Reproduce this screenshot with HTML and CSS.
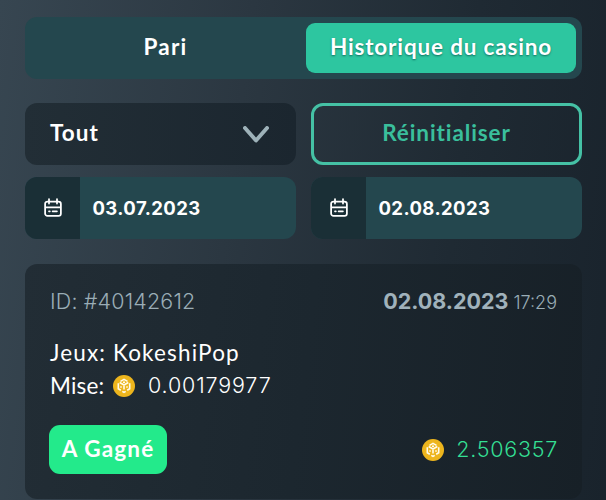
FILE: index.html
```html
<!DOCTYPE html>
<html lang="fr">
<head>
<meta charset="utf-8">
<title>Historique du casino</title>
<link rel="stylesheet" href="styles.css">
</head>
<body>
<svg class="defs" width="0" height="0" aria-hidden="true">
  <symbol id="calendar" viewBox="0 0 18 20">
    <path d="M3.5 3.5h11a2.4 2.4 0 0 1 2.4 2.4v9.6a2.4 2.4 0 0 1-2.4 2.4h-11a2.4 2.4 0 0 1-2.4-2.4V5.900a2.400 2.400 0 0 1 2.400-2.400zM1.100 9.300h15.800M5 1v4.500M13 1v4.500M5 13.300h.8M8.600 13.300h4.300" fill="none" stroke="currentColor" stroke-width="1.750" stroke-linecap="round"/>
  </symbol>
  <symbol id="coin" viewBox="0 0 22 22">
    <circle cx="11" cy="11" r="11" fill="#edb51d"/>
    <path d="M7.500 6.400 11 4.400l3.500 2M6.700 7.500 11 10l4.300-2.500M11 10v4.400M5.300 8.200v5.600l2.500 1.500M16.700 8.200v5.600l-2.500 1.500M9.300 16.400l1.700 1 1.700-1M8 11.200v1.500M14 11.200v1.500M10 7.200h2" fill="none" stroke="#fffbea" stroke-width="1.600"/>
  </symbol>
</svg>
<main class="page">
  <nav class="tabs">
    <a class="tab"><span class="tab-pari">Pari</span></a>
    <a class="tab active"><span class="tab-history">Historique du casino</span></a>
  </nav>
  <section class="filters">
    <div class="select">
      <span class="selected">Tout</span>
      <svg class="chevron" viewBox="0 0 26 17"><path d="M2 2l11 12.500L24 2" fill="none" stroke="currentColor" stroke-width="3.900" stroke-linecap="round" stroke-linejoin="round"/></svg>
    </div>
    <button class="reset">Réinitialiser</button>
    <div class="date"><span class="date-icon"><svg><use href="#calendar"/></svg></span><span class="date-value">03.07.2023</span></div>
    <div class="date"><span class="date-icon"><svg><use href="#calendar"/></svg></span><span class="date-value">02.08.2023</span></div>
  </section>
  <article class="card">
    <header class="row head">
      <span class="id">ID: #40142612</span>
      <span class="stamp"><b>02.08.2023</b><span class="time">17:29</span></span>
    </header>
    <div class="game">Jeux: KokeshiPop</div>
    <div class="bet"><span class="bet-label">Mise:</span><svg class="coin"><use href="#coin"/></svg><span class="amount">0.00179977</span></div>
    <footer class="row foot">
      <span class="won">A Gagné</span>
      <span class="payout"><svg class="coin"><use href="#coin"/></svg><span class="win">2.506357</span></span>
    </footer>
  </article>
</main>
</body>
</html>
```
FILE: styles.css
```css
* { box-sizing: border-box; }
body {
  margin: 0;
  height: 500px;
  overflow: hidden;
  background: linear-gradient(97deg, #374651 0%, #2b3741 38%, #1f2a33 72%, #19232c 100%);
  color: #fff;
  font-family: Lato, "Liberation Sans", sans-serif;
  font-size: 22.500px;
  font-variant-ligatures: none;
  white-space: nowrap;
}
.defs { display: block; }
.page { padding: 17px 24px 0 25px; }
.tabs {
  display: grid;
  grid-template-columns: 1fr 270px;
  height: 62px;
  padding: 6px 6px 6px 0;
  border-radius: 12px;
  background: #24474e;
}
.tab {
  display: flex;
  align-items: center;
  justify-content: center;
  font-weight: 700;
  border-radius: 9px;
  line-height: 46px;
  padding-bottom: 2px;
}
.tab-pari { letter-spacing: 1.200px; }
.tab-history { letter-spacing: 0.830px; }
.active { background: #2dc6a0; text-shadow: 0 1px 2px #08594dcc; }
.filters {
  display: grid;
  grid-template-columns: 271px 271px;
  gap: 12px 15px;
  margin-top: 24px;
}
.select, .reset, .date { height: 62px; border-radius: 12px; }
.select {
  display: flex;
  align-items: center;
  justify-content: space-between;
  padding: 0 27px 0 25px;
  background: linear-gradient(90deg, #222e36, #1b262f);
  font-weight: 700;
}
.selected { letter-spacing: 1px; padding-bottom: 3px; }
.chevron { width: 26px; height: 17px; color: #9eb2b9; }
.reset {
  border: 3px solid #45c1a5;
  background: transparent;
  color: #3abf9c;
  font: inherit;
  font-weight: 700;
  letter-spacing: 0.900px;
  padding: 0 0 3px;
}
.date { display: flex; overflow: hidden; background: #24474e; }
.date-icon {
  display: flex;
  align-items: center;
  justify-content: center;
  width: 55px;
  background: #1a2f36;
}
.date-icon svg { width: 18px; height: 20px; }
.date-value {
  padding-left: 12.500px;
  font: 650 18.500px/62px Inter, sans-serif;
  letter-spacing: 0.400px;
}
.card {
  height: 235px;
  margin-top: 25px;
  padding: 25px 25px 0 24px;
  border-radius: 12px;
  background: linear-gradient(97deg, #222d35, #1c272f 50%, #172027);
}
.row { display: flex; align-items: center; justify-content: space-between; }
.head { height: 25px; color: #9aadb6; }
.id { padding-left: 1px; font: 300 21.500px/25px Inter, sans-serif; letter-spacing: 0.150px; }
.stamp { display: flex; align-items: baseline; gap: 5px; }
.stamp b { font: 700 21.500px/25px Inter, sans-serif; color: #a0b2bb; }
.time { font: 300 18px/25px Inter, sans-serif; }
.game { margin-top: 22px; padding-left: 1px; line-height: 33px; letter-spacing: 1.150px; }
.bet { display: flex; align-items: center; height: 33px; }
.bet-label { width: 64px; padding-left: 1px; letter-spacing: 0.200px; padding-bottom: 1px; }
.coin { width: 22px; height: 22px; }
.bet .coin { margin-top: 1px; }
.amount { margin-left: 13px; font: 350 21.500px/33px Inter, sans-serif; letter-spacing: 0.850px; }
.foot { margin-top: 23px; height: 49px; }
.won {
  width: 118px;
  height: 49px;
  border-radius: 11px;
  background: #23ea8b;
  text-align: center;
  font-weight: 700;
  line-height: 48px;
  letter-spacing: 1.150px;
}
.payout { display: flex; align-items: center; gap: 12px; color: #34df93; }
.win { font: 350 21.500px/49px Inter, sans-serif; letter-spacing: 0.750px; margin-right: -1px; }
```
